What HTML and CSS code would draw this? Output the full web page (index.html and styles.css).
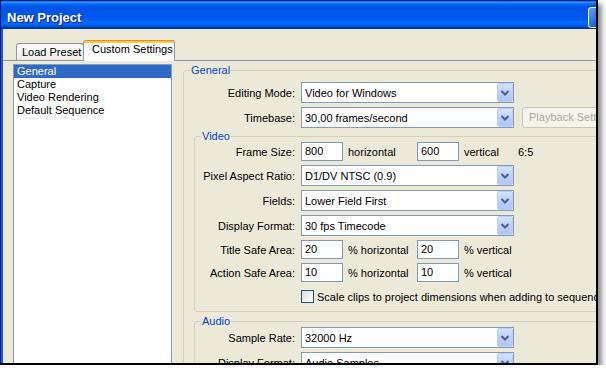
FILE: index.html
```html
<!DOCTYPE html>
<html lang="en">
<head>
    <meta charset="UTF-8">
    <title>New Project</title>
    <link rel="stylesheet" href="styles.css">
</head>
<body>
    <div class="window">
        <div class="titlebar">
            <span class="title">New Project</span>
            <span class="title-btn"></span>
        </div>

        <div class="client">
            <div class="tabs">
                <div class="tab">Load Preset</div>
                <div class="tab active">Custom Settings</div>
            </div>

            <div class="panel">
                <ul class="list">
                    <li class="selected">General</li>
                    <li>Capture</li>
                    <li>Video Rendering</li>
                    <li>Default Sequence</li>
                </ul>

                <div class="settings">
                    <div class="group general">
                        <span class="group-title">General</span>
                        <div class="rows">
                            <div class="row">
                                <span class="lbl">Editing Mode:</span>
                                <div class="select"><span>Video for Windows</span><span class="drop"><svg width="14" height="17" viewBox="0 0 14 17"><polyline points="3.5,7 7,10.5 10.5,7" fill="none" stroke="#4D6185" stroke-width="2"/></svg></span></div>
                            </div>
                            <div class="row">
                                <span class="lbl">Timebase:</span>
                                <div class="select"><span>30,00 frames/second</span><span class="drop"><svg width="14" height="17" viewBox="0 0 14 17"><polyline points="3.5,7 7,10.5 10.5,7" fill="none" stroke="#4D6185" stroke-width="2"/></svg></span></div>
                                <div class="btn">Playback Settings...</div>
                            </div>
                        </div>

                        <div class="group video">
                            <span class="group-title">Video</span>
                            <div class="rows">
                                <div class="row">
                                    <span class="lbl">Frame Size:</span>
                                    <div class="input">800</div>
                                    <span class="unit">horizontal</span>
                                    <div class="input">600</div>
                                    <span class="unit short">vertical</span>
                                    <span>6:5</span>
                                </div>
                                <div class="row">
                                    <span class="lbl">Pixel Aspect Ratio:</span>
                                    <div class="select"><span>D1/DV NTSC (0.9)</span><span class="drop"><svg width="14" height="17" viewBox="0 0 14 17"><polyline points="3.5,7 7,10.5 10.5,7" fill="none" stroke="#4D6185" stroke-width="2"/></svg></span></div>
                                </div>
                                <div class="row">
                                    <span class="lbl">Fields:</span>
                                    <div class="select"><span>Lower Field First</span><span class="drop"><svg width="14" height="17" viewBox="0 0 14 17"><polyline points="3.5,7 7,10.5 10.5,7" fill="none" stroke="#4D6185" stroke-width="2"/></svg></span></div>
                                </div>
                                <div class="row">
                                    <span class="lbl">Display Format:</span>
                                    <div class="select"><span>30 fps Timecode</span><span class="drop"><svg width="14" height="17" viewBox="0 0 14 17"><polyline points="3.5,7 7,10.5 10.5,7" fill="none" stroke="#4D6185" stroke-width="2"/></svg></span></div>
                                </div>
                                <div class="row">
                                    <span class="lbl">Title Safe Area:</span>
                                    <div class="input">20</div>
                                    <span class="unit">% horizontal</span>
                                    <div class="input">20</div>
                                    <span class="unit short">% vertical</span>
                                </div>
                                <div class="row">
                                    <span class="lbl">Action Safe Area:</span>
                                    <div class="input">10</div>
                                    <span class="unit">% horizontal</span>
                                    <div class="input">10</div>
                                    <span class="unit short">% vertical</span>
                                </div>
                                <div class="row check-row">
                                    <span class="lbl"></span>
                                    <span class="check"></span>
                                    <span class="check-text">Scale clips to project dimensions when adding to sequence</span>
                                </div>
                            </div>
                        </div>

                        <div class="group audio">
                            <span class="group-title">Audio</span>
                            <div class="rows">
                                <div class="row">
                                    <span class="lbl">Sample Rate:</span>
                                    <div class="select"><span>32000 Hz</span><span class="drop"><svg width="14" height="17" viewBox="0 0 14 17"><polyline points="3.5,7 7,10.5 10.5,7" fill="none" stroke="#4D6185" stroke-width="2"/></svg></span></div>
                                </div>
                                <div class="row">
                                    <span class="lbl">Display Format:</span>
                                    <div class="select"><span>Audio Samples</span><span class="drop"><svg width="14" height="17" viewBox="0 0 14 17"><polyline points="3.5,7 7,10.5 10.5,7" fill="none" stroke="#4D6185" stroke-width="2"/></svg></span></div>
                                </div>
                            </div>
                        </div>
                    </div>
                </div>
            </div>
        </div>
    </div>
</body>
</html>
```

FILE: styles.css
```css
body {
    margin: 0;
    background-color: #fff;
    font-family: "Liberation Sans", Arial, sans-serif;
    font-size: 11px;
    color: #000;
}

.window {
    box-sizing: border-box;
    width: 598px;
    height: 365px;
    border-top: 1px solid #0a1d6b;
    border-left: 1px solid #0a1d6b;
    border-right: 2px solid #000;
    border-bottom: 2px solid #000;
    background-color: #ece9d8;
    box-shadow: 4px 4px 5px rgba(0, 0, 0, 0.45);
    overflow: hidden;
    display: flex;
    flex-direction: column;
}

/* title bar */
.titlebar {
    flex: none;
    height: 28px;
    box-sizing: border-box;
    padding: 4px 0 0 6px;
    display: flex;
    align-items: center;
    background: linear-gradient(to bottom, #0058ee 0%, #3593ff 4%, #288eff 6%, #127dff 8%, #036ffc 10%, #0262ee 14%, #0057e5 20%, #0054e3 24%, #0055eb 56%, #005bf5 66%, #026afe 76%, #0062ef 86%, #0052d6 92%, #0040ab 94%, #003092 100%);
}

.title {
    color: #fff;
    font-weight: bold;
    font-size: 13px;
    text-shadow: 1px 1px #0a1883;
}

.title-btn {
    margin-left: auto;
    margin-right: -13px;
    width: 21px;
    height: 21px;
    box-sizing: border-box;
    border: 1px solid #fff;
    border-radius: 3px;
    background: linear-gradient(135deg, #6a9cf5, #2161e0 60%, #1d55cf);
}

.client {
    flex: 1;
    min-height: 0;
    border-left: 2px solid #1658f0;
    display: flex;
    flex-direction: column;
}

/* tabs */
.tabs {
    flex: none;
    display: flex;
    align-items: flex-end;
    height: 20px;
    margin-top: 11px;
    padding-left: 13px;
}

.tab {
    box-sizing: border-box;
    width: 68px;
    height: 17px;
    padding-left: 5px;
    line-height: 16px;
    border: 1px solid #919b9c;
    border-bottom: none;
    border-radius: 3px 3px 0 0;
    background: linear-gradient(to bottom, #fff, #ecebe6);
    white-space: nowrap;
}

.tab.active {
    position: relative;
    z-index: 1;
    width: 92px;
    height: 21px;
    margin-left: -1px;
    margin-bottom: -1px;
    padding-left: 8px;
    line-height: 19px;
    border-top: none;
    background: linear-gradient(to bottom, #e68b2c 0 1px, #ffc73c 1px 3px, #fcfcfe 3px);
}

.panel {
    flex: 1;
    min-height: 0;
    border-top: 1px solid #919b9c;
    padding: 3px 0 0 10px;
    display: flex;
    gap: 11px;
}

/* left list */
.list {
    flex: none;
    box-sizing: border-box;
    width: 159px;
    height: 320px;
    margin: 0;
    padding: 0;
    list-style: none;
    border: 1px solid #7f9db9;
    background-color: #fff;
}

.list li {
    height: 13px;
    line-height: 13px;
    padding-left: 3px;
    white-space: nowrap;
}

.list li.selected {
    background-color: #316ac5;
    color: #fff;
}

/* settings groups */
.settings {
    flex: 1;
    min-width: 0;
}

.group {
    position: relative;
    border: 1px solid #d0d0bf;
    border-radius: 3px;
}

.group-title {
    position: absolute;
    top: -7px;
    left: 6px;
    padding: 0 1px;
    line-height: 13px;
    background-color: #ece9d8;
    color: #0046d5;
}

.general {
    width: 440px;
    margin-top: 6px;
    padding-top: 11px;
}

.general > .rows .lbl {
    width: 111px;
}

.video {
    margin: 8px 0 0 10px;
    padding: 5px 0 8px 0;
}

.audio {
    margin: 9px 0 0 10px;
    padding: 5px 0 20px 0;
}

.video .lbl,
.audio .lbl {
    width: 100px;
}

.rows {
    display: flex;
    flex-direction: column;
    gap: 4px;
}

.row {
    display: flex;
    align-items: center;
    white-space: nowrap;
}

.lbl {
    flex: none;
    margin-right: 6px;
    text-align: right;
}

.select {
    flex: none;
    box-sizing: border-box;
    width: 213px;
    height: 21px;
    border: 1px solid #7f9db9;
    background-color: #fff;
    display: flex;
    align-items: center;
}

.select > span:first-child {
    flex: 1;
    padding-left: 3px;
}

.drop {
    align-self: stretch;
    box-sizing: border-box;
    width: 16px;
    border: 1px solid #bacdf8;
    border-radius: 2px;
    background: linear-gradient(to bottom, #d4e2fd, #bacff9 55%, #afc6f6);
    display: flex;
    align-items: center;
    justify-content: center;
}

.btn {
    flex: none;
    margin-left: 8px;
    box-sizing: border-box;
    height: 21px;
    padding: 0 6px;
    line-height: 19px;
    border: 1px solid #c9c7ba;
    border-radius: 3px;
    background-color: #f5f4ea;
    color: #aca899;
}

.input {
    flex: none;
    box-sizing: border-box;
    width: 42px;
    height: 19px;
    padding-left: 3px;
    line-height: 17px;
    border: 1px solid #7f9db9;
    background-color: #fff;
}

.unit {
    flex: none;
    box-sizing: border-box;
    width: 74px;
    padding-left: 5px;
}

.unit.short {
    width: 59px;
}

.check-row {
    margin-top: 4px;
}

.check {
    flex: none;
    box-sizing: border-box;
    width: 13px;
    height: 13px;
    border: 1px solid #1c5180;
    background: linear-gradient(135deg, #dcdcd7, #fff);
}

.check-text {
    margin-left: 3px;
}
```
